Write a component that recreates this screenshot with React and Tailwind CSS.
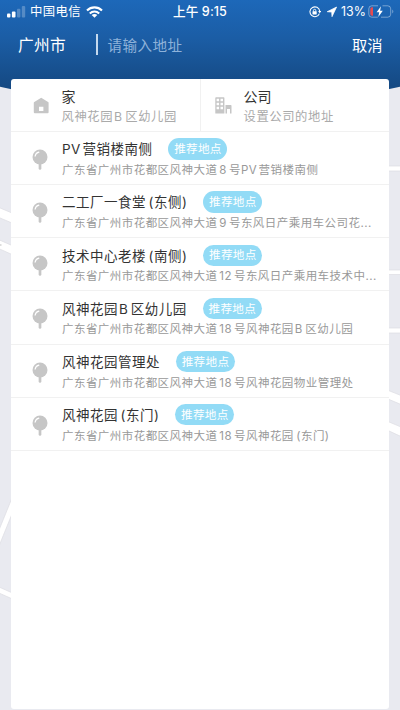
const PLACES = [
  { id: 1, name: 'PV营销楼南侧', address: '广东省广州市花都区风神大道8号PV营销楼南侧' },
  { id: 2, name: '二工厂一食堂(东侧)', address: '广东省广州市花都区风神大道9号东风日产乘用车公司花...' },
  { id: 3, name: '技术中心老楼(南侧)', address: '广东省广州市花都区风神大道12号东风日产乘用车技术中...' },
  { id: 4, name: '风神花园B区幼儿园', address: '广东省广州市花都区风神大道18号风神花园B区幼儿园' },
  { id: 5, name: '风神花园管理处', address: '广东省广州市花都区风神大道18号风神花园物业管理处' },
  { id: 6, name: '风神花园(东门)', address: '广东省广州市花都区风神大道18号风神花园(东门)' },
]

// Adds a little air between Chinese characters and latin runs
function Mixed({ text }) {
  return text.split(/([A-Z]+|[0-9]+|\()/).map((part, i) => {
    if (part === '(') return <span key={i} className="ml-[2.5px]">(</span>
    if (part === 'B') return <span key={i} className="ml-[1px] mr-[2.5px]">B</span>
    if (/^[A-Z]+$/.test(part)) return <span key={i} className="mr-[1.5px]">{part}</span>
    if (/^[0-9]+$/.test(part)) return <span key={i} className="mx-[2px]">{part}</span>
    return part
  })
}

function MapBackground() {
  return (
    <svg className="absolute inset-0" width="400" height="710" viewBox="0 0 400 710">
      <defs>
        <linearGradient id="sky" x1="0" y1="0" x2="0" y2="1">
          <stop offset="0" stopColor="#1d68b9" />
          <stop offset="0.35" stopColor="#1b5da5" />
          <stop offset="0.78" stopColor="#154a84" />
          <stop offset="1" stopColor="#134780" />
        </linearGradient>
      </defs>
      <rect width="400" height="710" fill="#e9eaf0" />
      <g fill="#fff" stroke="#dcdde2" strokeWidth="0.7">
        <path d="M-1 207.5L12 213V223L-1 217.5z" />
        <path d="M-1 239.8L12 245.5V254.5L-1 248.7z" />
        <path d="M-1 530L12 498V514L-1 546z" />
        <path d="M-1 587L12 592.8V598.8L-1 593z" />
        <path d="M388 166H401V171H388z" />
        <path d="M388 270H401V274.5H388z" />
        <path d="M388 328H401V333H388z" />
        <path d="M388 390.3L401 395.5V404.5L388 399z" />
        <path d="M388 421.5L401 427V436.5L388 430.5z" />
      </g>
      <path d="M0 245h1.5" stroke="#bbb" />
      <path d="M0 0H400V86.7Q200 133 0 86.7z" fill="url(#sky)" />
    </svg>
  )
}

function StatusBar() {
  return (
    <div className="flex h-[22px] items-center pt-[1px] text-[12.4px] leading-none text-white">
      <div className="flex w-[173px] items-center pl-[7px]">
        <svg width="19" height="12" viewBox="0 0 19 12" fill="#fff">
          <rect x="0" y="7.5" width="3.4" height="4" rx="1" />
          <rect x="4.9" y="5.5" width="3.6" height="6" rx="1" />
          <rect x="10" y="2.7" width="3.4" height="8.8" rx="1" opacity="0.25" />
          <rect x="14.8" y="0" width="3.4" height="11.5" rx="1" opacity="0.25" />
        </svg>
        <span className="ml-[4px] mt-[1px] tracking-[0.35px]">中国电信</span>
        <svg className="ml-[5px]" width="17" height="12" viewBox="0 0 17 12" fill="none" stroke="#fff" strokeWidth="2.1">
          <path d="M1 4.4C5.2.3 11.8.3 16 4.4" />
          <path d="M3.8 7.4C6.5 4.8 10.5 4.8 13.2 7.4" />
          <path d="M8.5 11.8L5.7 9C7.3 7.5 9.7 7.5 11.3 9z" fill="#fff" stroke="none" />
        </svg>
      </div>
      <div className="mt-[1px] w-[136px] whitespace-nowrap text-[12.6px] font-medium tracking-[0.1px]">上午 9:15</div>
      <svg width="12" height="12" viewBox="0 0 12 12" fill="none" stroke="#fff">
        <path d="M10.4 7.6A4.9 4.9 0 1 1 10.7 5" strokeWidth="1.1" />
        <path d="M9.1 5.1h3.1L10.7 7.2z" fill="#fff" stroke="none" />
        <rect x="3.5" y="5.3" width="4.2" height="3.2" rx="0.4" fill="#fff" stroke="none" />
        <path d="M4.4 5.6V4.5a1.2 1.2 0 0 1 2.4 0v1.1" strokeWidth="0.9" />
      </svg>
      <svg className="ml-[5px]" width="12" height="12" viewBox="0 0 12 12">
        <path d="M10.6 1L1.2 5.7l4.5.4.3 4.6z" fill="#fff" stroke="#fff" strokeWidth="0.7" strokeLinejoin="round" />
      </svg>
      <span className="ml-[3px] mt-[1px] w-[25px] whitespace-nowrap text-[12.4px]">13%</span>
      <svg className="ml-[2px]" width="27" height="13" viewBox="0 0 27 13">
        <path d="M10 .8H3.8Q.8.8.8 3.8v5.4q0 3 3 3h6M14.5 .8h5.2q3 0 3 3v5.4q0 3-3 3H13" fill="none" stroke="#fff" strokeOpacity="0.4" strokeWidth="1" />
        <path d="M24.3 4.5q2 2 0 4z" fill="#fff" opacity="0.45" />
        <path d="M5 2.3v8.4H4q-1.7 0-1.7-1.7V4q0-1.7 1.7-1.7z" fill="#e84b50" />
        <path d="M13 1.2L8.6 7.2h2.6l-.9 4.7L14.8 5.8h-2.7z" fill="#fff" />
      </svg>
    </div>
  )
}

function PinIcon() {
  return (
    <svg width="16" height="22" viewBox="0 0 16 22">
      <path d="M8 13v6.5" stroke="#c6c6c6" strokeWidth="2.7" strokeLinecap="round" />
      <circle cx="8" cy="8" r="7.5" fill="#c6c6c6" />
      <path d="M3.1 7.2A5 5 0 0 1 6.9 3.1" fill="none" stroke="#fff" strokeWidth="1.1" strokeLinecap="round" />
    </svg>
  )
}

function HomeIcon() {
  return (
    <svg width="16" height="17" viewBox="0 0 16 17">
      <path fillRule="evenodd" d="M8.2 .8L15.1 5q.5.3.5.9v9.3q0 1-1 1H1.8q-1 0-1-1V5.9q0-.6.5-.9zM6 9.8v4.2h4.4V9.8z" fill="#c6c6c6" />
    </svg>
  )
}

function CompanyIcon() {
  return (
    <svg width="17" height="17" viewBox="0 0 17 17" fill="#c6c6c6">
      <path fillRule="evenodd" d="M1 .3h7.7q.7 0 .7.7v15.4H.3V1Q.3.3 1 .3zM1.6 1.8v2.5h2.5V1.8zM5.5 1.8v2.5H8V1.8zM1.6 5.8v2.5h2.5V5.8zM5.5 5.8v2.5H8V5.8zM1.6 9.8v2.5h2.5V9.8zM5.5 9.8v2.5H8V9.8z" />
      <path d="M10.5 8h5.3q.7 0 .7.7v7.7H15v-4.5h-3v4.5h-1.5z" />
    </svg>
  )
}

function Shortcut({ icon, title, text, className }) {
  return (
    <div className={`flex ${className}`}>
      <div className="mt-[18px] w-[28.5px] shrink-0">{icon}</div>
      <div className="whitespace-nowrap">
        <p className="mt-[8px] text-[14px] leading-[20px] text-[#333]">{title}</p>
        <p className="mt-[1px] text-[12.3px] leading-[18px] tracking-[0.6px] text-[#aaa]">
          <Mixed text={text} />
        </p>
      </div>
    </div>
  )
}

function PlaceRow({ name, address }) {
  return (
    <li className="flex h-[53.15px] border-b border-[#f1f1f1] pl-[21px]">
      <div className="mt-[17px] w-[30px] shrink-0">
        <PinIcon />
      </div>
      <div className="whitespace-nowrap">
        <div className="mt-[6px] flex h-[22px] items-center">
          <h3 className="mt-[2px] text-[13.5px] leading-none tracking-[0.5px] text-[#333]">
            <Mixed text={name} />
          </h3>
          <span className="ml-[16px] flex h-[21.5px] w-[59px] items-center justify-center rounded-full bg-[#92dbf6] pt-[2px] text-[11.6px] leading-none tracking-[0.3px] text-white">
            推荐地点
          </span>
        </div>
        <p className="mt-[1px] text-[11.5px] leading-[18px] tracking-[0.45px] text-[#999]">
          <Mixed text={address} />
        </p>
      </div>
    </li>
  )
}

export default function App() {
  return (
    <div className="relative h-[710px] w-[400px] overflow-hidden font-['Inter','Noto_Sans_CJK_SC',sans-serif]">
      <MapBackground />
      <div className="relative flex h-full flex-col">
        <StatusBar />
        <header className="flex h-[57px] items-start pt-[12px] text-white">
          <span className="w-[96px] pl-[18px] pt-[1px] text-[15.7px] leading-[22px] tracking-[0.3px]">广州市</span>
          <span className="h-[21px] w-[1.5px] bg-[#c5d9ee]" />
          <span className="flex-1 pl-[10px] pt-[1px] text-[14.6px] leading-[22px] tracking-[0.4px] text-[#8eb2da]">请输入地址</span>
          <button className="pr-[17.5px] pt-[1px] text-[15.3px] leading-[22px]">取消</button>
        </header>
        <main className="mx-[11px] h-[630px] rounded-[3px] bg-white">
          <div className="flex h-[53px] border-b border-[#f1f1f1]">
            <Shortcut className="w-[190px] border-r border-[#f1f1f1] pl-[22px]" icon={<HomeIcon />} title="家" text="风神花园B区幼儿园" />
            <Shortcut className="pl-[14px]" icon={<CompanyIcon />} title="公司" text="设置公司的地址" />
          </div>
          <ul>
            {PLACES.map((p) => (
              <PlaceRow key={p.id} name={p.name} address={p.address} />
            ))}
          </ul>
        </main>
      </div>
    </div>
  )
}
